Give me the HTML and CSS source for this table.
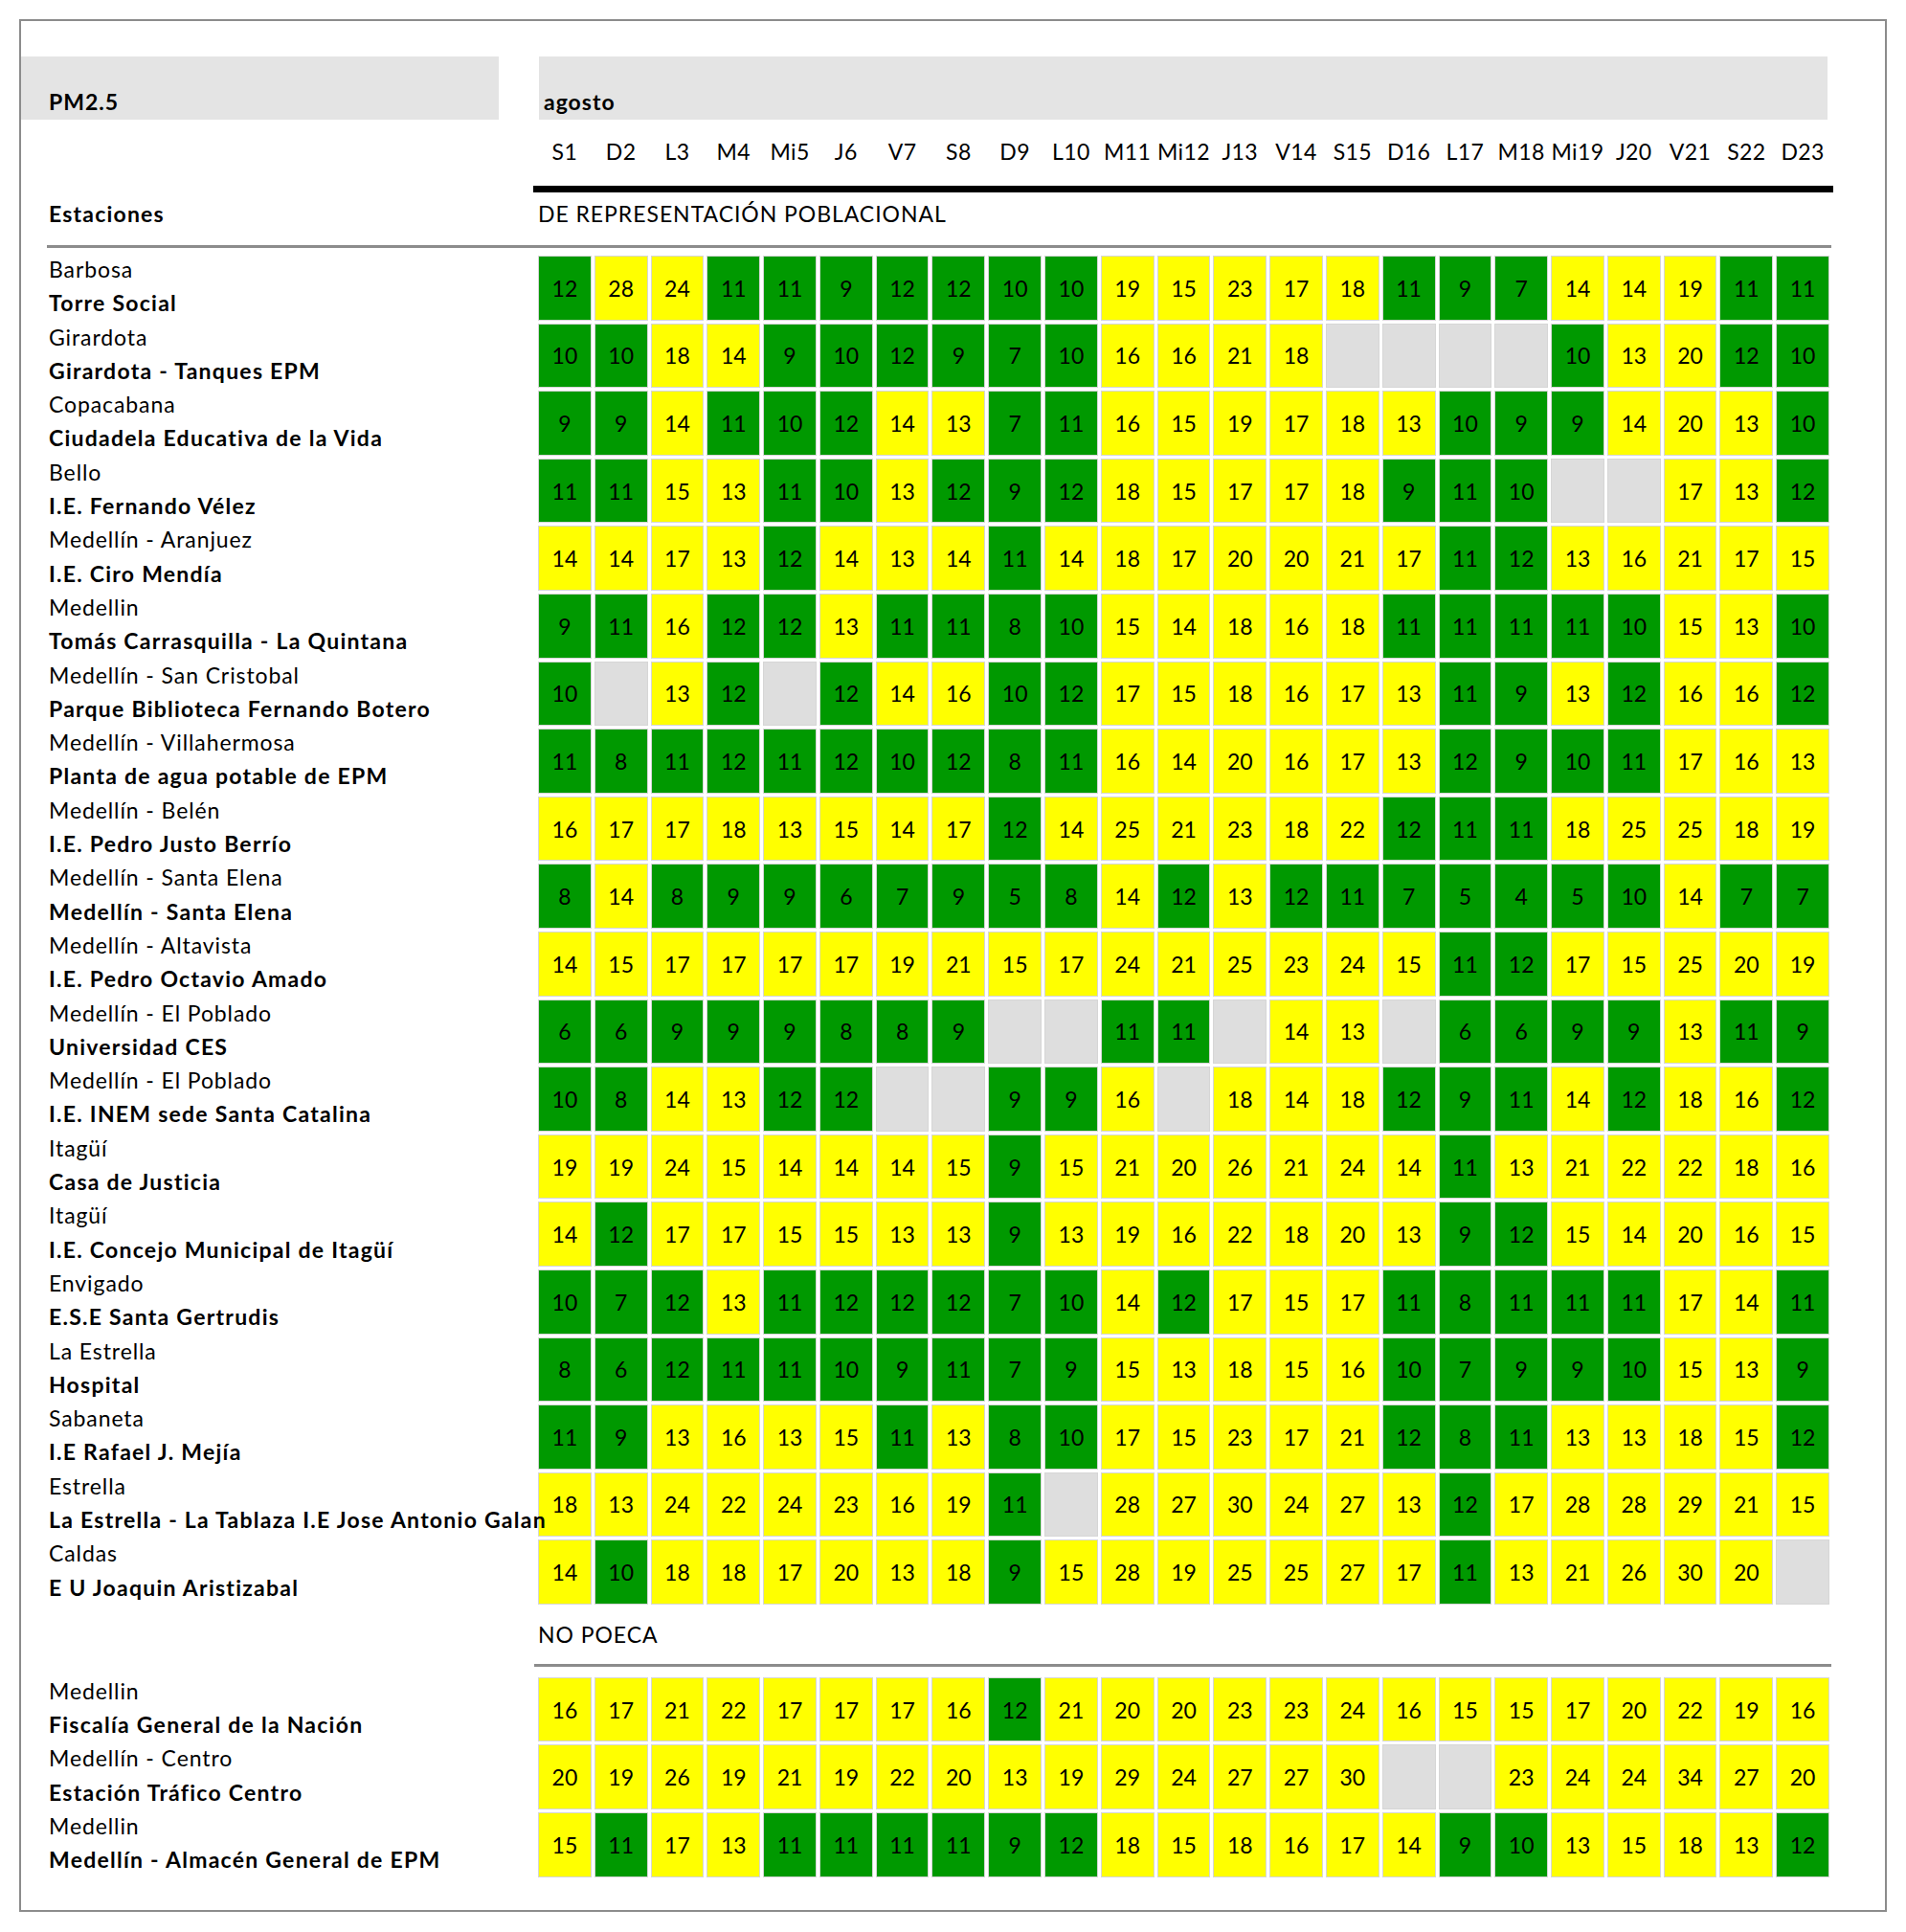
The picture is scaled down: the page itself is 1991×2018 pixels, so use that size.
FILE: index.html
```html
<!DOCTYPE html>
<html lang="es">
<head>
<meta charset="utf-8">
<title>PM2.5 agosto</title>
<link rel="stylesheet" href="styles.css">
</head>
<body>
<div class="frame">
  <div class="head">
    <div class="pm">PM2.5</div>
    <div class="month">agosto</div>
  </div>
  <div class="grid days">
    <span class="blank"></span>
    <span>S1</span><span>D2</span><span>L3</span><span>M4</span><span>Mi5</span><span>J6</span><span>V7</span><span>S8</span><span>D9</span><span>L10</span><span>M11</span><span>Mi12</span><span>J13</span><span>V14</span><span>S15</span><span>D16</span><span>L17</span><span>M18</span><span>Mi19</span><span>J20</span><span>V21</span><span>S22</span><span>D23</span>
  </div>
  <div class="black-rule"></div>
  <div class="sec-head">
    <div class="est">Estaciones</div>
    <div class="sec">DE REPRESENTACIÓN POBLACIONAL</div>
  </div>
  <div class="rule"></div>
  <div class="rows first">
    <div class="grid row"><div class="name"><span class="city">Barbosa</span><strong class="st">Torre Social</strong></div><span class="g">12</span><span class="y">28</span><span class="y">24</span><span class="g">11</span><span class="g">11</span><span class="g">9</span><span class="g">12</span><span class="g">12</span><span class="g">10</span><span class="g">10</span><span class="y">19</span><span class="y">15</span><span class="y">23</span><span class="y">17</span><span class="y">18</span><span class="g">11</span><span class="g">9</span><span class="g">7</span><span class="y">14</span><span class="y">14</span><span class="y">19</span><span class="g">11</span><span class="g">11</span></div>
    <div class="grid row"><div class="name"><span class="city">Girardota</span><strong class="st">Girardota - Tanques EPM</strong></div><span class="g">10</span><span class="g">10</span><span class="y">18</span><span class="y">14</span><span class="g">9</span><span class="g">10</span><span class="g">12</span><span class="g">9</span><span class="g">7</span><span class="g">10</span><span class="y">16</span><span class="y">16</span><span class="y">21</span><span class="y">18</span><span class="n"></span><span class="n"></span><span class="n"></span><span class="n"></span><span class="g">10</span><span class="y">13</span><span class="y">20</span><span class="g">12</span><span class="g">10</span></div>
    <div class="grid row"><div class="name"><span class="city">Copacabana</span><strong class="st">Ciudadela Educativa de la Vida</strong></div><span class="g">9</span><span class="g">9</span><span class="y">14</span><span class="g">11</span><span class="g">10</span><span class="g">12</span><span class="y">14</span><span class="y">13</span><span class="g">7</span><span class="g">11</span><span class="y">16</span><span class="y">15</span><span class="y">19</span><span class="y">17</span><span class="y">18</span><span class="y">13</span><span class="g">10</span><span class="g">9</span><span class="g">9</span><span class="y">14</span><span class="y">20</span><span class="y">13</span><span class="g">10</span></div>
    <div class="grid row"><div class="name"><span class="city">Bello</span><strong class="st">I.E. Fernando Vélez</strong></div><span class="g">11</span><span class="g">11</span><span class="y">15</span><span class="y">13</span><span class="g">11</span><span class="g">10</span><span class="y">13</span><span class="g">12</span><span class="g">9</span><span class="g">12</span><span class="y">18</span><span class="y">15</span><span class="y">17</span><span class="y">17</span><span class="y">18</span><span class="g">9</span><span class="g">11</span><span class="g">10</span><span class="n"></span><span class="n"></span><span class="y">17</span><span class="y">13</span><span class="g">12</span></div>
    <div class="grid row"><div class="name"><span class="city">Medellín - Aranjuez</span><strong class="st">I.E. Ciro Mendía</strong></div><span class="y">14</span><span class="y">14</span><span class="y">17</span><span class="y">13</span><span class="g">12</span><span class="y">14</span><span class="y">13</span><span class="y">14</span><span class="g">11</span><span class="y">14</span><span class="y">18</span><span class="y">17</span><span class="y">20</span><span class="y">20</span><span class="y">21</span><span class="y">17</span><span class="g">11</span><span class="g">12</span><span class="y">13</span><span class="y">16</span><span class="y">21</span><span class="y">17</span><span class="y">15</span></div>
    <div class="grid row"><div class="name"><span class="city">Medellin</span><strong class="st">Tomás Carrasquilla - La Quintana</strong></div><span class="g">9</span><span class="g">11</span><span class="y">16</span><span class="g">12</span><span class="g">12</span><span class="y">13</span><span class="g">11</span><span class="g">11</span><span class="g">8</span><span class="g">10</span><span class="y">15</span><span class="y">14</span><span class="y">18</span><span class="y">16</span><span class="y">18</span><span class="g">11</span><span class="g">11</span><span class="g">11</span><span class="g">11</span><span class="g">10</span><span class="y">15</span><span class="y">13</span><span class="g">10</span></div>
    <div class="grid row"><div class="name"><span class="city">Medellín - San Cristobal</span><strong class="st">Parque Biblioteca Fernando Botero</strong></div><span class="g">10</span><span class="n"></span><span class="y">13</span><span class="g">12</span><span class="n"></span><span class="g">12</span><span class="y">14</span><span class="y">16</span><span class="g">10</span><span class="g">12</span><span class="y">17</span><span class="y">15</span><span class="y">18</span><span class="y">16</span><span class="y">17</span><span class="y">13</span><span class="g">11</span><span class="g">9</span><span class="y">13</span><span class="g">12</span><span class="y">16</span><span class="y">16</span><span class="g">12</span></div>
    <div class="grid row"><div class="name"><span class="city">Medellín - Villahermosa</span><strong class="st">Planta de agua potable de EPM</strong></div><span class="g">11</span><span class="g">8</span><span class="g">11</span><span class="g">12</span><span class="g">11</span><span class="g">12</span><span class="g">10</span><span class="g">12</span><span class="g">8</span><span class="g">11</span><span class="y">16</span><span class="y">14</span><span class="y">20</span><span class="y">16</span><span class="y">17</span><span class="y">13</span><span class="g">12</span><span class="g">9</span><span class="g">10</span><span class="g">11</span><span class="y">17</span><span class="y">16</span><span class="y">13</span></div>
    <div class="grid row"><div class="name"><span class="city">Medellín - Belén</span><strong class="st">I.E. Pedro Justo Berrío</strong></div><span class="y">16</span><span class="y">17</span><span class="y">17</span><span class="y">18</span><span class="y">13</span><span class="y">15</span><span class="y">14</span><span class="y">17</span><span class="g">12</span><span class="y">14</span><span class="y">25</span><span class="y">21</span><span class="y">23</span><span class="y">18</span><span class="y">22</span><span class="g">12</span><span class="g">11</span><span class="g">11</span><span class="y">18</span><span class="y">25</span><span class="y">25</span><span class="y">18</span><span class="y">19</span></div>
    <div class="grid row"><div class="name"><span class="city">Medellín - Santa Elena</span><strong class="st">Medellín - Santa Elena</strong></div><span class="g">8</span><span class="y">14</span><span class="g">8</span><span class="g">9</span><span class="g">9</span><span class="g">6</span><span class="g">7</span><span class="g">9</span><span class="g">5</span><span class="g">8</span><span class="y">14</span><span class="g">12</span><span class="y">13</span><span class="g">12</span><span class="g">11</span><span class="g">7</span><span class="g">5</span><span class="g">4</span><span class="g">5</span><span class="g">10</span><span class="y">14</span><span class="g">7</span><span class="g">7</span></div>
    <div class="grid row"><div class="name"><span class="city">Medellín - Altavista</span><strong class="st">I.E. Pedro Octavio Amado</strong></div><span class="y">14</span><span class="y">15</span><span class="y">17</span><span class="y">17</span><span class="y">17</span><span class="y">17</span><span class="y">19</span><span class="y">21</span><span class="y">15</span><span class="y">17</span><span class="y">24</span><span class="y">21</span><span class="y">25</span><span class="y">23</span><span class="y">24</span><span class="y">15</span><span class="g">11</span><span class="g">12</span><span class="y">17</span><span class="y">15</span><span class="y">25</span><span class="y">20</span><span class="y">19</span></div>
    <div class="grid row"><div class="name"><span class="city">Medellín - El Poblado</span><strong class="st">Universidad CES</strong></div><span class="g">6</span><span class="g">6</span><span class="g">9</span><span class="g">9</span><span class="g">9</span><span class="g">8</span><span class="g">8</span><span class="g">9</span><span class="n"></span><span class="n"></span><span class="g">11</span><span class="g">11</span><span class="n"></span><span class="y">14</span><span class="y">13</span><span class="n"></span><span class="g">6</span><span class="g">6</span><span class="g">9</span><span class="g">9</span><span class="y">13</span><span class="g">11</span><span class="g">9</span></div>
    <div class="grid row"><div class="name"><span class="city">Medellín - El Poblado</span><strong class="st">I.E. INEM sede Santa Catalina</strong></div><span class="g">10</span><span class="g">8</span><span class="y">14</span><span class="y">13</span><span class="g">12</span><span class="g">12</span><span class="n"></span><span class="n"></span><span class="g">9</span><span class="g">9</span><span class="y">16</span><span class="n"></span><span class="y">18</span><span class="y">14</span><span class="y">18</span><span class="g">12</span><span class="g">9</span><span class="g">11</span><span class="y">14</span><span class="g">12</span><span class="y">18</span><span class="y">16</span><span class="g">12</span></div>
    <div class="grid row"><div class="name"><span class="city">Itagüí</span><strong class="st">Casa de Justicia</strong></div><span class="y">19</span><span class="y">19</span><span class="y">24</span><span class="y">15</span><span class="y">14</span><span class="y">14</span><span class="y">14</span><span class="y">15</span><span class="g">9</span><span class="y">15</span><span class="y">21</span><span class="y">20</span><span class="y">26</span><span class="y">21</span><span class="y">24</span><span class="y">14</span><span class="g">11</span><span class="y">13</span><span class="y">21</span><span class="y">22</span><span class="y">22</span><span class="y">18</span><span class="y">16</span></div>
    <div class="grid row"><div class="name"><span class="city">Itagüí</span><strong class="st">I.E. Concejo Municipal de Itagüí</strong></div><span class="y">14</span><span class="g">12</span><span class="y">17</span><span class="y">17</span><span class="y">15</span><span class="y">15</span><span class="y">13</span><span class="y">13</span><span class="g">9</span><span class="y">13</span><span class="y">19</span><span class="y">16</span><span class="y">22</span><span class="y">18</span><span class="y">20</span><span class="y">13</span><span class="g">9</span><span class="g">12</span><span class="y">15</span><span class="y">14</span><span class="y">20</span><span class="y">16</span><span class="y">15</span></div>
    <div class="grid row"><div class="name"><span class="city">Envigado</span><strong class="st">E.S.E Santa Gertrudis</strong></div><span class="g">10</span><span class="g">7</span><span class="g">12</span><span class="y">13</span><span class="g">11</span><span class="g">12</span><span class="g">12</span><span class="g">12</span><span class="g">7</span><span class="g">10</span><span class="y">14</span><span class="g">12</span><span class="y">17</span><span class="y">15</span><span class="y">17</span><span class="g">11</span><span class="g">8</span><span class="g">11</span><span class="g">11</span><span class="g">11</span><span class="y">17</span><span class="y">14</span><span class="g">11</span></div>
    <div class="grid row"><div class="name"><span class="city">La Estrella</span><strong class="st">Hospital</strong></div><span class="g">8</span><span class="g">6</span><span class="g">12</span><span class="g">11</span><span class="g">11</span><span class="g">10</span><span class="g">9</span><span class="g">11</span><span class="g">7</span><span class="g">9</span><span class="y">15</span><span class="y">13</span><span class="y">18</span><span class="y">15</span><span class="y">16</span><span class="g">10</span><span class="g">7</span><span class="g">9</span><span class="g">9</span><span class="g">10</span><span class="y">15</span><span class="y">13</span><span class="g">9</span></div>
    <div class="grid row"><div class="name"><span class="city">Sabaneta</span><strong class="st">I.E Rafael J. Mejía</strong></div><span class="g">11</span><span class="g">9</span><span class="y">13</span><span class="y">16</span><span class="y">13</span><span class="y">15</span><span class="g">11</span><span class="y">13</span><span class="g">8</span><span class="g">10</span><span class="y">17</span><span class="y">15</span><span class="y">23</span><span class="y">17</span><span class="y">21</span><span class="g">12</span><span class="g">8</span><span class="g">11</span><span class="y">13</span><span class="y">13</span><span class="y">18</span><span class="y">15</span><span class="g">12</span></div>
    <div class="grid row"><div class="name"><span class="city">Estrella</span><strong class="st">La Estrella - La Tablaza I.E Jose Antonio Galan</strong></div><span class="y">18</span><span class="y">13</span><span class="y">24</span><span class="y">22</span><span class="y">24</span><span class="y">23</span><span class="y">16</span><span class="y">19</span><span class="g">11</span><span class="n"></span><span class="y">28</span><span class="y">27</span><span class="y">30</span><span class="y">24</span><span class="y">27</span><span class="y">13</span><span class="g">12</span><span class="y">17</span><span class="y">28</span><span class="y">28</span><span class="y">29</span><span class="y">21</span><span class="y">15</span></div>
    <div class="grid row"><div class="name"><span class="city">Caldas</span><strong class="st">E U Joaquin Aristizabal</strong></div><span class="y">14</span><span class="g">10</span><span class="y">18</span><span class="y">18</span><span class="y">17</span><span class="y">20</span><span class="y">13</span><span class="y">18</span><span class="g">9</span><span class="y">15</span><span class="y">28</span><span class="y">19</span><span class="y">25</span><span class="y">25</span><span class="y">27</span><span class="y">17</span><span class="g">11</span><span class="y">13</span><span class="y">21</span><span class="y">26</span><span class="y">30</span><span class="y">20</span><span class="n"></span></div>
  </div>
  <div class="sec-head sec-head-2">
    <div class="est"></div>
    <div class="sec">NO POECA</div>
  </div>
  <div class="rule rule-short"></div>
  <div class="rows second">
    <div class="grid row"><div class="name"><span class="city">Medellin</span><strong class="st">Fiscalía General de la Nación</strong></div><span class="y">16</span><span class="y">17</span><span class="y">21</span><span class="y">22</span><span class="y">17</span><span class="y">17</span><span class="y">17</span><span class="y">16</span><span class="g">12</span><span class="y">21</span><span class="y">20</span><span class="y">20</span><span class="y">23</span><span class="y">23</span><span class="y">24</span><span class="y">16</span><span class="y">15</span><span class="y">15</span><span class="y">17</span><span class="y">20</span><span class="y">22</span><span class="y">19</span><span class="y">16</span></div>
    <div class="grid row"><div class="name"><span class="city">Medellín - Centro</span><strong class="st">Estación Tráfico Centro</strong></div><span class="y">20</span><span class="y">19</span><span class="y">26</span><span class="y">19</span><span class="y">21</span><span class="y">19</span><span class="y">22</span><span class="y">20</span><span class="y">13</span><span class="y">19</span><span class="y">29</span><span class="y">24</span><span class="y">27</span><span class="y">27</span><span class="y">30</span><span class="n"></span><span class="n"></span><span class="y">23</span><span class="y">24</span><span class="y">24</span><span class="y">34</span><span class="y">27</span><span class="y">20</span></div>
    <div class="grid row"><div class="name"><span class="city">Medellin</span><strong class="st">Medellín - Almacén General de EPM</strong></div><span class="y">15</span><span class="g">11</span><span class="y">17</span><span class="y">13</span><span class="g">11</span><span class="g">11</span><span class="g">11</span><span class="g">11</span><span class="g">9</span><span class="g">12</span><span class="y">18</span><span class="y">15</span><span class="y">18</span><span class="y">16</span><span class="y">17</span><span class="y">14</span><span class="g">9</span><span class="g">10</span><span class="y">13</span><span class="y">15</span><span class="y">18</span><span class="y">13</span><span class="g">12</span></div>
  </div>
</div>
</body>
</html>
```

FILE: styles.css
```css
* { box-sizing: border-box; }

html, body {
  margin: 0;
  padding: 0;
  background: #ffffff;
}

body {
  font-family: "Lato", "Open Sans", "Liberation Sans", sans-serif;
  font-size: 23px;
  color: #000000;
}

.frame {
  margin: 20px 0 0 20px;
  width: 1951px;
  height: 1977px;
  border: 2px solid #8c8c8c;
  padding-top: 37px;
}

.head {
  display: flex;
  gap: 42px;
  height: 66px;
}

.pm,
.month {
  background: #e4e4e4;
  font-weight: 700;
  font-size: 23px;
  line-height: 22px;
  letter-spacing: 1px;
  display: flex;
  align-items: flex-end;
  padding-bottom: 8px;
}

.pm {
  width: 499px;
  padding-left: 29px;
}

.month {
  width: 1346px;
  padding-left: 5px;
}

.grid {
  display: grid;
  grid-template-columns: 537px repeat(23, 1fr);
  column-gap: 3px;
  width: 1889px;
}

.days {
  height: 69px;
  line-height: 66px;
  text-align: center;
  letter-spacing: 0.4px;
}

.black-rule {
  margin-left: 535px;
  width: 1358px;
  height: 7px;
  background: #000000;
}

.sec-head {
  display: grid;
  grid-template-columns: 537px 1fr;
  column-gap: 3px;
  height: 55px;
  line-height: 45px;
}

.est {
  font-weight: 700;
  padding-left: 29px;
  letter-spacing: 1.2px;
}

.sec {
  padding-left: 0;
  letter-spacing: 0.95px;
}

.rule {
  margin-left: 27px;
  width: 1864px;
  height: 3px;
  background: #8c8c8c;
}

.rule-short {
  margin-left: 536px;
  width: 1355px;
}

.rows.first {
  margin-top: 8px;
}

.rows.second {
  margin-top: 11px;
}

.sec-head-2 {
  height: 59px;
  line-height: 56px;
}

.row {
  height: 67.6px;
  margin-bottom: 3px;
}

.name {
  position: relative;
  z-index: 1;
  margin-top: -3px;
  padding-left: 29px;
  display: flex;
  flex-direction: column;
  line-height: 35.3px;
  white-space: nowrap;
}

.city {
  font-weight: 400;
  letter-spacing: 0.9px;
}

.st {
  font-weight: 700;
  letter-spacing: 1.25px;
}

.row > span {
  display: flex;
  align-items: center;
  justify-content: center;
  border: 1px solid #d6d6d6;
}

.g { background: #009900; }
.y { background: #ffff00; }
.n { background: #dedede; }
```
